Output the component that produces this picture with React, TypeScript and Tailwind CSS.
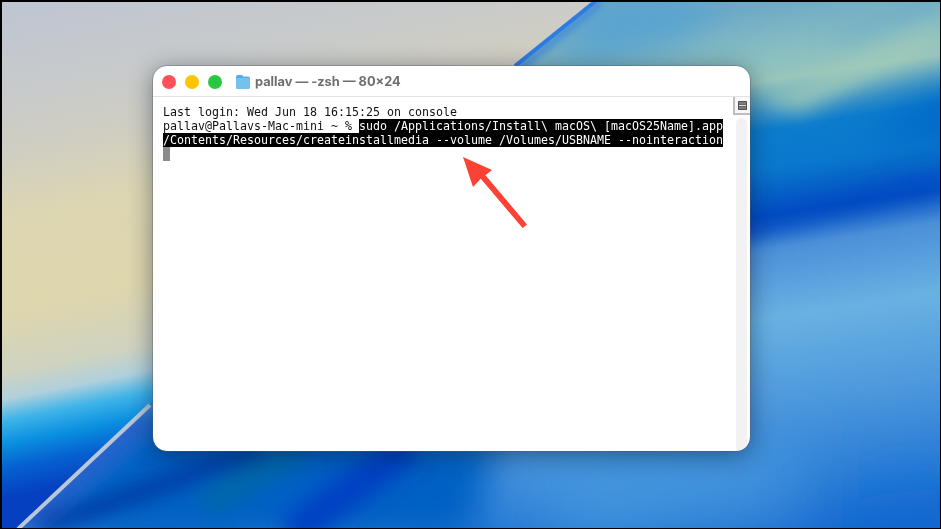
export default function App() {
  return (
    <div className="relative w-[941px] h-[529px] overflow-hidden bg-black pl-[153px] pt-[66px]">
      <Wallpaper />
      <div className="relative flex flex-col w-[597px] h-[385px] rounded-[14px] overflow-hidden bg-white shadow-[0_4px_24px_rgba(0,20,50,0.48)] outline outline-1 outline-[rgba(90,90,90,0.35)]">
        <div className="flex items-center h-[31px] shrink-0 pl-[9px] pt-[1px] border-b border-[#e3e3e3]">
          <span className="w-[14px] h-[14px] rounded-full bg-[#ff5257]" />
          <span className="w-[14px] h-[14px] rounded-full bg-[#ffc500] ml-[9px]" />
          <span className="w-[14px] h-[14px] rounded-full bg-[#28c840] ml-[9px]" />
          <svg width="16" height="15" viewBox="0 0 16 15" className="ml-[13px] -mt-[1px]">
            <path d="M1 3C1 1.7 1.7 1 3 1h3.2c.8 0 1.1.3 1.5.8l.7.8H13c1.2 0 2 .8 2 2v8.3c0 1.3-.8 2.1-2 2.1H3c-1.3 0-2-.8-2-2.1z" fill="#55ade2" />
            <path d="M1 5.2c0-.8.5-1.3 1.3-1.3h11.4c.8 0 1.3.5 1.3 1.3v7.6c0 1.3-.8 2.1-2 2.1H3c-1.3 0-2-.8-2-2.1z" fill="#74c1ef" />
          </svg>
          <span className="ml-[4px] text-[12.8px] leading-[16px] font-bold text-[#6e6e6e] font-['Inter',sans-serif] whitespace-nowrap">pallav — -zsh — 80×24</span>
        </div>
        <div className="flex flex-1 min-h-0">
          <div className="flex-1 pl-[10px] pt-[8px] font-['DejaVu_Sans_Mono',monospace] text-[11.63px] leading-[14px] text-[#111] whitespace-pre">
            <div className="h-[14px]">Last login: Wed Jun 18 16:15:25 on console</div>
            <div className="h-[14px]">
              pallav@Pallavs-Mac-mini ~ % <span className="inline-block h-[14px] bg-black text-white">sudo /Applications/Install\ macOS\ [macOS25Name].app</span>
            </div>
            <div className="h-[14px]">
              <span className="inline-block h-[14px] bg-black text-white">/Contents/Resources/createinstallmedia --volume /Volumes/USBNAME --nointeraction</span>
            </div>
            <div className="w-[7px] h-[14px] bg-[#8c8c8c]" />
          </div>
          <div className="flex flex-col w-[17px] shrink-0">
            <div className="flex items-center justify-center h-[18px] shrink-0 border-l-2 border-b-2 border-[#bdbdbd] bg-[#f8f8f8]">
              <svg width="9" height="9" viewBox="0 0 9 9">
                <rect width="9" height="9" rx="0.8" fill="#505050" />
                <rect x="1" y="1" width="7" height="2.5" fill="#7c7c7c" />
                <rect x="1" y="4" width="7" height="1" fill="#dddddd" />
                <rect x="1" y="5.5" width="7" height="2.5" fill="#7c7c7c" />
              </svg>
            </div>
            <div className="flex-1 ml-[3px] mt-[3px] w-[11px] rounded-t-[6px] rounded-b-[4px] bg-[#f2f2f2]" />
          </div>
        </div>
      </div>
      <svg className="absolute left-0 top-0 pointer-events-none" width="941" height="529" viewBox="0 0 941 529">
        <path d="M463 157 492 170 485.4 175.2 527 224.5 522.6 228 480.8 178.8 473 187Z" fill="#fb4234" />
      </svg>
    </div>
  );
}

function Wallpaper() {
  return (
    <svg className="absolute left-0 top-0" width="941" height="529" viewBox="0 0 941 529">
      <defs>
        <clipPath id="frame"><rect x="2" y="2" width="938" height="526" /></clipPath>
        <clipPath id="leftPart"><polygon points="0,0 597,0 515,66 150,405 18,529 0,529" /></clipPath>
        <clipPath id="rightPart"><polygon points="597,0 941,0 941,529 18,529 150,405 515,66" /></clipPath>
        <linearGradient id="leftBg" gradientUnits="userSpaceOnUse" x1="0" y1="0" x2="100" y2="500">
          <stop offset="0" stopColor="#bec5d2" />
          <stop offset="0.2" stopColor="#c9cbca" />
          <stop offset="0.3" stopColor="#d0cec2" />
          <stop offset="0.42" stopColor="#dcd6b2" />
          <stop offset="0.6" stopColor="#ded6ad" />
          <stop offset="0.72" stopColor="#cfd3c0" />
          <stop offset="0.77" stopColor="#b0d0dc" />
          <stop offset="0.81" stopColor="#40b4e8" />
          <stop offset="0.856" stopColor="#0a90e0" />
          <stop offset="0.904" stopColor="#0660d0" />
          <stop offset="0.96" stopColor="#0440c0" />
          <stop offset="1" stopColor="#0440c0" />
        </linearGradient>
        <linearGradient id="rightBg" gradientUnits="userSpaceOnUse" x1="800" y1="0" x2="880" y2="529">
          <stop offset="0" stopColor="#6eaac6" />
          <stop offset="0.08" stopColor="#86bcc2" />
          <stop offset="0.14" stopColor="#98c6bc" />
          <stop offset="0.195" stopColor="#3d94c6" />
          <stop offset="0.23" stopColor="#0c7ccc" />
          <stop offset="0.3" stopColor="#0a78cc" />
          <stop offset="0.39" stopColor="#0450c4" />
          <stop offset="0.45" stopColor="#4a90d8" />
          <stop offset="0.58" stopColor="#68b2e2" />
          <stop offset="0.74" stopColor="#4e98dc" />
          <stop offset="1" stopColor="#0e68d0" />
        </linearGradient>
        <filter id="b2" x="-30%" y="-30%" width="160%" height="160%"><feGaussianBlur stdDeviation="2.5" /></filter>
        <filter id="b1" x="-10%" y="-10%" width="120%" height="120%"><feGaussianBlur stdDeviation="0.6" /></filter>
        <filter id="b10" x="-50%" y="-50%" width="200%" height="200%"><feGaussianBlur stdDeviation="10" /></filter>
        <filter id="b18" x="-50%" y="-50%" width="200%" height="200%"><feGaussianBlur stdDeviation="18" /></filter>
        <filter id="b34" x="-50%" y="-50%" width="200%" height="200%"><feGaussianBlur stdDeviation="34" /></filter>
      </defs>
      <g clipPath="url(#frame)">
        <g clipPath="url(#leftPart)">
          <rect width="941" height="529" fill="url(#leftBg)" />
        </g>
        <g clipPath="url(#rightPart)">
          <rect width="941" height="529" fill="url(#rightBg)" />
          <g filter="url(#b18)">
            <polygon points="600,-10 740,-10 680,40 560,70" fill="#58a4d0" />
            <polygon points="941,92 980,92 980,140 860,140" fill="#0468c8" />
            <polygon points="0,540 470,540 500,440 150,410" fill="#0660c4" />
          </g>
          <g filter="url(#b34)">
            <polygon points="520,440 800,440 800,510 560,540" fill="#4496dc" />
            <polygon points="700,545 960,505 960,570 700,570" fill="#1268d0" />
          </g>
          <g filter="url(#b10)">
            <polygon points="760,100 800,112 941,42 941,28" fill="#a2ccb8" opacity="0.8" />
            <polygon points="820,42 941,-8 941,8 850,40" fill="#5fa6c8" opacity="0.6" />
            <polygon points="740,218 941,172 941,190 740,238" fill="#0348c2" opacity="0.8" />
            <line x1="150" y1="415" x2="20" y2="525" stroke="#2058c8" strokeWidth="20" />
            <line x1="262" y1="450" x2="40" y2="527" stroke="#04309c" strokeWidth="14" />
            <line x1="300" y1="448" x2="205" y2="505" stroke="#0668a8" strokeWidth="26" />
            <line x1="410" y1="445" x2="290" y2="535" stroke="#0440c2" strokeWidth="34" />
            <line x1="240" y1="532" x2="110" y2="532" stroke="#0760c4" strokeWidth="14" />
          </g>
          <polyline points="597,0 515,66" fill="none" stroke="#3b86dc" strokeWidth="10" opacity="0.55" filter="url(#b2)" transform="translate(4 2)" />
        </g>
        <g filter="url(#b1)" fill="none">
          <polyline points="597,0 515,66" stroke="#2f7be2" strokeWidth="4" />
          <polyline points="150,405 18,529" stroke="#b8c8d8" strokeWidth="4" />
        </g>
      </g>
    </svg>
  );
}
